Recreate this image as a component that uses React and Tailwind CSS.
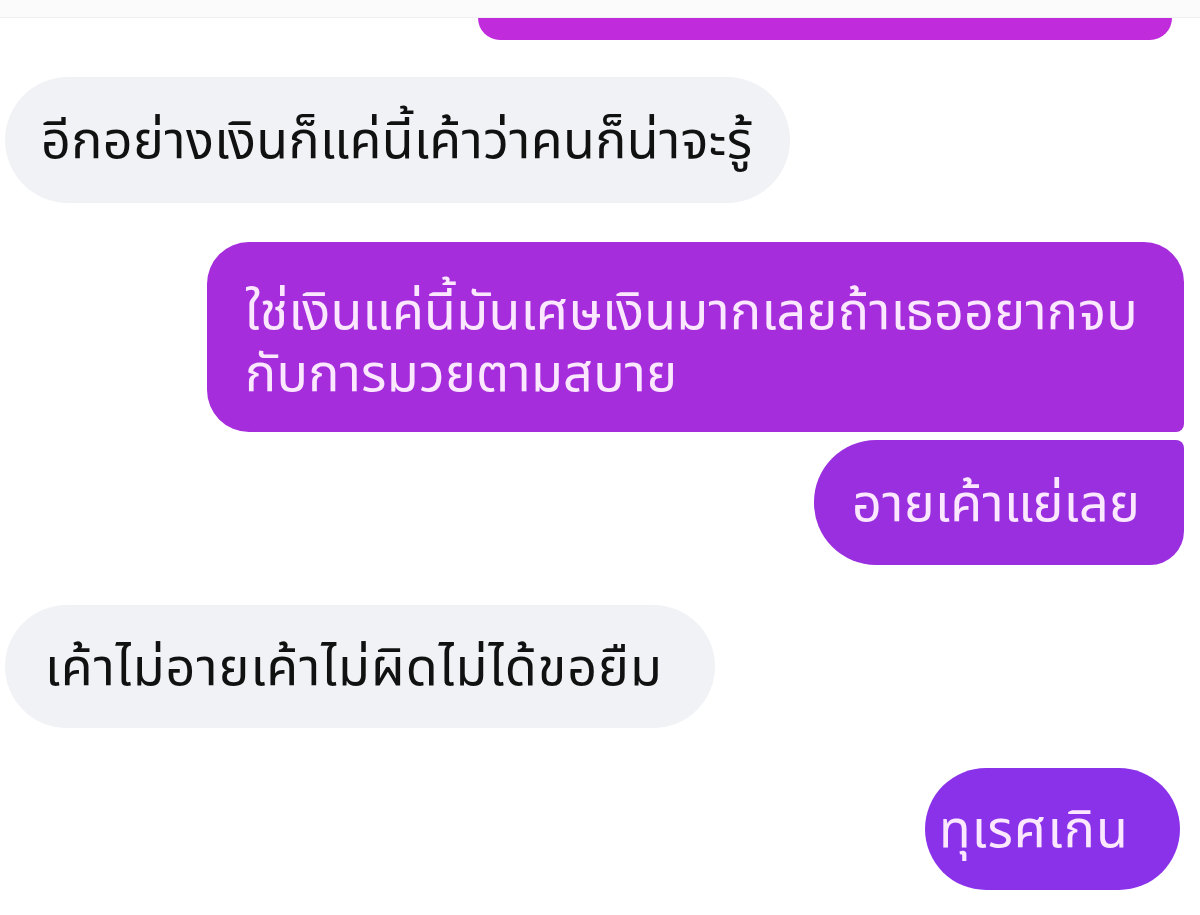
export default function App() {
  const font = { fontFamily: '"Noto Sans Thai", "Noto Sans", "DejaVu Sans", sans-serif' };

  return (
    <div className="w-[1200px] h-[915px] bg-white overflow-hidden flex flex-col" style={font}>
      {/* top cut-off strip + tail of previous bubble */}
      <div className="h-[18px] bg-[#fbfbfb] border-b border-[#f0f0f0]" />
      <div className="ml-[478px] w-[694px] h-[22px] rounded-b-[26px] bg-[#c02bdc]" />

      {/* incoming */}
      <div className="mt-[37px] ml-[5px] w-[785px] h-[126px] rounded-[63px] bg-[#f1f2f6] flex items-center pl-[36px] pt-[4px]">
        <span className="text-[52px] leading-none text-[#111] tracking-[0.4px]">
          อีกอย่างเงินก็แค่นี้เค้าว่าคนก็น่าจะรู้
        </span>
      </div>

      {/* outgoing group */}
      <div className="mt-[39px] flex flex-col items-end mr-[16px] gap-[8px]">
        <div className="w-[977px] h-[190px] rounded-tl-[42px] rounded-bl-[42px] rounded-tr-[40px] rounded-br-[8px] bg-[#a52ddb] px-[38px] pt-[40px]">
          <p className="text-[52px] leading-[62px] text-[#fbe8ff] tracking-[0.3px]">
            ใช่เงินแค่นี้มันเศษเงินมากเลยถ้าเธออยากจบ
            <br />
            กับการมวยตามสบาย
          </p>
        </div>
        <div className="w-[370px] h-[125px] rounded-l-[62px] rounded-tr-[8px] rounded-br-[34px] bg-[#9a2fe0] flex items-center pl-[38px] pt-[4px]">
          <span className="text-[52px] leading-none text-[#fbe8ff] tracking-[0.4px]">อายเค้าแย่เลย</span>
        </div>
      </div>

      {/* incoming */}
      <div className="mt-[40px] ml-[5px] w-[710px] h-[123px] rounded-[62px] bg-[#f1f2f6] flex items-center pl-[40px] pt-[4px]">
        <span className="text-[52px] leading-none text-[#111] tracking-[1px]">
          เค้าไม่อายเค้าไม่ผิดไม่ได้ขอยืม
        </span>
      </div>

      {/* outgoing */}
      <div className="mt-[40px] self-end mr-[20px] w-[255px] h-[122px] rounded-[61px] bg-[#8a32ea] flex items-center pl-[14px] pt-[4px]">
        <span className="text-[52px] leading-none text-[#fbe8ff] tracking-[1px]">ทุเรศเกิน</span>
      </div>
    </div>
  );
}
